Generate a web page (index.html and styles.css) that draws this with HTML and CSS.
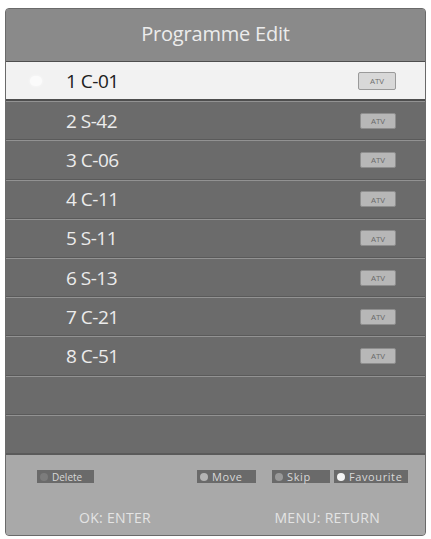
FILE: index.html
```html
<!DOCTYPE html>
<html>
<head>
<meta charset="utf-8">
<link rel="stylesheet" href="styles.css">
</head>
<body>
<div class="panel">
  <div class="title">Programme Edit</div>
  <div class="list">
    <div class="row sel"><span class="mark"></span><span class="name">1 C-01</span><span class="atv">ATV</span></div>
    <div class="row"><span class="mark"></span><span class="name">2 S-42</span><span class="atv">ATV</span></div>
    <div class="row"><span class="mark"></span><span class="name">3 C-06</span><span class="atv">ATV</span></div>
    <div class="row"><span class="mark"></span><span class="name">4 C-11</span><span class="atv">ATV</span></div>
    <div class="row"><span class="mark"></span><span class="name">5 S-11</span><span class="atv">ATV</span></div>
    <div class="row"><span class="mark"></span><span class="name">6 S-13</span><span class="atv">ATV</span></div>
    <div class="row"><span class="mark"></span><span class="name">7 C-21</span><span class="atv">ATV</span></div>
    <div class="row"><span class="mark"></span><span class="name">8 C-51</span><span class="atv">ATV</span></div>
    <div class="row"></div>
    <div class="row"></div>
  </div>
  <div class="footer">
    <div class="keys">
      <span class="key k-del"><i class="dot d-red"></i>Delete</span>
      <span class="spacer"></span>
      <span class="key k-move"><i class="dot d-green"></i>Move</span>
      <span class="key k-skip"><i class="dot d-yellow"></i>Skip</span>
      <span class="key k-fav"><i class="dot d-blue"></i>Favourite</span>
    </div>
    <div class="hints">
      <span class="hint">OK: ENTER</span>
      <span class="hint">MENU: RETURN</span>
    </div>
  </div>
</div>
</body>
</html>
```
FILE: styles.css
```css
html, body {
  margin: 0;
  padding: 0;
  background: #ffffff;
}
body {
  font-family: "Open Sans", "DejaVu Sans", sans-serif;
}
.panel {
  margin: 8px 0 0 5px;
  width: 421px;
  height: 528px;
  box-sizing: border-box;
  border: 1px solid #6a6a6a;
  border-radius: 4px;
  overflow: hidden;
  display: flex;
  flex-direction: column;
  background: #a9a9a9;
}
.title {
  height: 53px;
  box-sizing: border-box;
  border-bottom: 1px solid #4e4e4e;
  background: #8a8a8a;
  color: #ececec;
  font-size: 20px;
  letter-spacing: -0.2px;
  display: flex;
  align-items: center;
  justify-content: center;
  padding-bottom: 3px;
}
.list {
  height: 392px;
  display: grid;
  grid-template-rows: repeat(10, 1fr);
  background: #6a6a6a;
}
.row {
  display: flex;
  align-items: center;
  box-sizing: border-box;
  border-bottom: 1px solid #5a5a5a;
  border-top: 1px solid #929292;
  background: #6b6b6b;
  color: #ececec;
  font-size: 19px;
  padding: 0 29px 0 24px;
}
.row:first-child {
  border-top: none;
}
.row.sel {
  background: #f2f2f2;
  color: #202020;
  border-bottom: 2px solid #4e4e4e;
}
.mark {
  width: 12px;
  height: 10px;
  margin-right: 24px;
  border-radius: 5px;
}
.row.sel .mark {
  background: #fbfbfb;
  box-shadow: 0 0 3px #fbfbfb;
}
.name {
  flex: 1;
  letter-spacing: -0.5px;
}
.atv {
  width: 36px;
  height: 16px;
  box-sizing: border-box;
  background: #b7b7b7;
  color: #6a6a6a;
  font-size: 8px;
  display: flex;
  align-items: center;
  justify-content: center;
  border-radius: 2px;
  border: 1px solid #8e8e8e;
}
.row.sel .atv {
  background: #d8d8d8;
  border-color: #9a9a9a;
  height: 18px;
  width: 38px;
  color: #707070;
}
.footer {
  flex: 1;
  background: #a9a9a9;
  border-top: 1px solid #5a5a5a;
  display: flex;
  flex-direction: column;
}
.keys {
  display: flex;
  align-items: center;
  padding: 15px 17px 0 31px;
}
.spacer {
  flex: 1;
}
.key {
  height: 13px;
  background: #6a6a6a;
  color: #d8d8d8;
  font-size: 11px;
  display: flex;
  align-items: center;
  padding: 0 4px 0 3px;
  box-sizing: border-box;
  letter-spacing: 0.6px;
}
.k-del { width: 57px; font-size: 10px; letter-spacing: 0; }
.k-move { width: 59px; margin-right: 16px; }
.k-skip { width: 58px; margin-right: 4px; }
.k-fav { width: 74px; }
.dot {
  width: 8px;
  height: 8px;
  border-radius: 50%;
  margin-right: 4px;
  flex: none;
}
.d-red { background: #7c7c7c; }
.d-green { background: #b4b4b4; }
.d-yellow { background: #999999; }
.d-blue { background: #f4f4f4; }
.hints {
  display: flex;
  justify-content: space-between;
  padding: 0 45px 0 73px;
  margin-top: 25px;
}
.hint {
  color: #e4e4e4;
  font-size: 14px;
  letter-spacing: 0.3px;
}
```
